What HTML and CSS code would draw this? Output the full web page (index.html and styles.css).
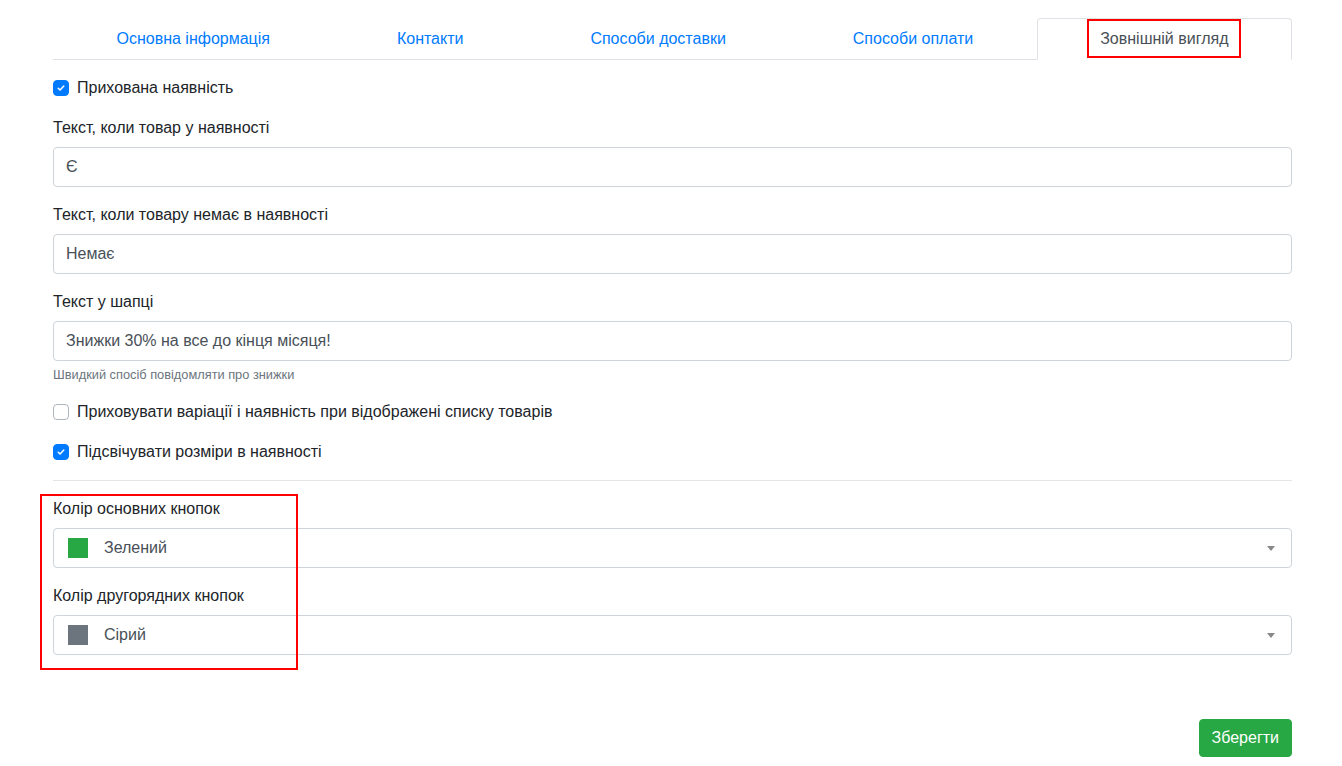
FILE: index.html
```html
<!DOCTYPE html>
<html lang="uk">
<head>
<meta charset="utf-8">
<title>Налаштування</title>
<link rel="stylesheet" href="styles.css">
</head>
<body>
<div class="page">
  <ul class="nav-tabs">
    <li class="nav-item"><a class="nav-link">Основна інформація</a></li>
    <li class="nav-item"><a class="nav-link">Контакти</a></li>
    <li class="nav-item"><a class="nav-link">Способи доставки</a></li>
    <li class="nav-item"><a class="nav-link">Способи оплати</a></li>
    <li class="nav-item"><a class="nav-link active"><span class="marked">Зовнішній вигляд</span></a></li>
  </ul>

  <div class="tab-content">
    <div class="form-group check">
      <span class="box checked"><svg viewBox="0 0 8 8" width="8" height="8"><path d="M1.2 4.2 L3.1 6 L6.8 2" fill="none" stroke="#fff" stroke-width="1.5" stroke-linecap="round" stroke-linejoin="round"/></svg></span>
      <span class="check-label">Прихована наявність</span>
    </div>

    <div class="form-group">
      <label class="label">Текст, коли товар у наявності</label>
      <div class="input">Є</div>
    </div>

    <div class="form-group">
      <label class="label">Текст, коли товару немає в наявності</label>
      <div class="input">Немає</div>
    </div>

    <div class="form-group">
      <label class="label">Текст у шапці</label>
      <div class="input">Знижки 30% на все до кінця місяця!</div>
      <small class="form-text">Швидкий спосіб повідомляти про знижки</small>
    </div>

    <div class="form-group check">
      <span class="box"></span>
      <span class="check-label">Приховувати варіації і наявність при відображені списку товарів</span>
    </div>

    <div class="form-group check">
      <span class="box checked"><svg viewBox="0 0 8 8" width="8" height="8"><path d="M1.2 4.2 L3.1 6 L6.8 2" fill="none" stroke="#fff" stroke-width="1.5" stroke-linecap="round" stroke-linejoin="round"/></svg></span>
      <span class="check-label">Підсвічувати розміри в наявності</span>
    </div>

    <hr class="divider">

    <div class="colors">
      <div class="form-group">
        <label class="label">Колір основних кнопок</label>
        <div class="select">
          <span class="swatch green"></span>
          <span class="select-text">Зелений</span>
          <span class="arrow"></span>
        </div>
      </div>
      <div class="form-group last">
        <label class="label">Колір другорядних кнопок</label>
        <div class="select">
          <span class="swatch grey"></span>
          <span class="select-text">Сірий</span>
          <span class="arrow"></span>
        </div>
      </div>
    </div>

    <div class="footer">
      <button class="btn-save">Зберегти</button>
    </div>
  </div>
</div>
</body>
</html>
```

FILE: styles.css
```css
*, *::before, *::after { box-sizing: border-box; }

html, body {
  margin: 0;
  padding: 0;
  background: #fff;
}

body {
  font-family: "Liberation Sans", Arial, sans-serif;
  font-size: 16px;
  line-height: 24px;
  color: #212529;
}

.page {
  padding: 18px 50px 0 53px;
}

.nav-tabs {
  display: flex;
  list-style: none;
  margin: 0;
  padding: 0;
  border-bottom: 1px solid #dee2e6;
}

.nav-item {
  flex: 1 1 auto;
  text-align: center;
  margin-bottom: -1px;
}

.nav-link {
  display: block;
  padding: 8px 16px;
  border: 1px solid transparent;
  border-top-left-radius: 4px;
  border-top-right-radius: 4px;
  color: #007bff;
  white-space: nowrap;
}

.nav-link.active {
  color: #495057;
  background: #fff;
  border-color: #dee2e6 #dee2e6 #fff;
}

.marked {
  position: relative;
}

.marked::after {
  content: "";
  position: absolute;
  left: -13px;
  right: -12px;
  top: -11px;
  bottom: -11px;
  border: 2px solid #f00;
}

.tab-content {
  padding-top: 16px;
}

.form-group {
  margin-bottom: 16px;
}

.check {
  display: flex;
  align-items: center;
  min-height: 24px;
}

.box {
  width: 16px;
  height: 16px;
  border: 1px solid #adb5bd;
  border-radius: 4px;
  background: #fff;
  margin-right: 8px;
  display: flex;
  align-items: center;
  justify-content: center;
  flex: none;
}

.box.checked {
  background: #007bff;
  border-color: #007bff;
}

.box svg { display: block; }

.label {
  display: block;
  margin-bottom: 7px;
}

.input {
  height: 40px;
  padding: 7px 12px;
  border: 1px solid #ced4da;
  border-radius: 4px;
  color: #495057;
  line-height: 24px;
}

.form-text {
  display: block;
  margin-top: 4px;
  font-size: 12.8px;
  line-height: 19.2px;
  color: #6c757d;
}

.divider {
  margin: 0 0 16px;
  border: 0;
  border-top: 1px solid rgba(0, 0, 0, 0.1);
  height: 0;
}

.colors {
  position: relative;
}

.colors::after {
  content: "";
  position: absolute;
  left: -13px;
  top: -3px;
  width: 258px;
  height: 176px;
  border: 2px solid #f00;
  pointer-events: none;
}

.form-group.last {
  margin-bottom: 0;
}

.select {
  height: 40px;
  border: 1px solid #ced4da;
  border-radius: 4px;
  display: flex;
  align-items: center;
  padding-left: 14px;
  padding-right: 16px;
  color: #495057;
}

.swatch {
  width: 20px;
  height: 20px;
  margin-right: 16px;
  flex: none;
}

.swatch.green { background: #28a745; }
.swatch.grey { background: #6c757d; }

.select-text {
  flex: 1;
}

.arrow {
  width: 0;
  height: 0;
  border-style: solid;
  border-width: 5px 4px 0 4px;
  border-color: #888 transparent transparent transparent;
}

.footer {
  display: flex;
  justify-content: flex-end;
  margin-top: 64px;
}

.btn-save {
  font-family: inherit;
  font-size: 16px;
  line-height: 24px;
  padding: 6px 12px;
  height: 38px;
  color: #fff;
  background: #28a745;
  border: 1px solid #28a745;
  border-radius: 4px;
}
```
